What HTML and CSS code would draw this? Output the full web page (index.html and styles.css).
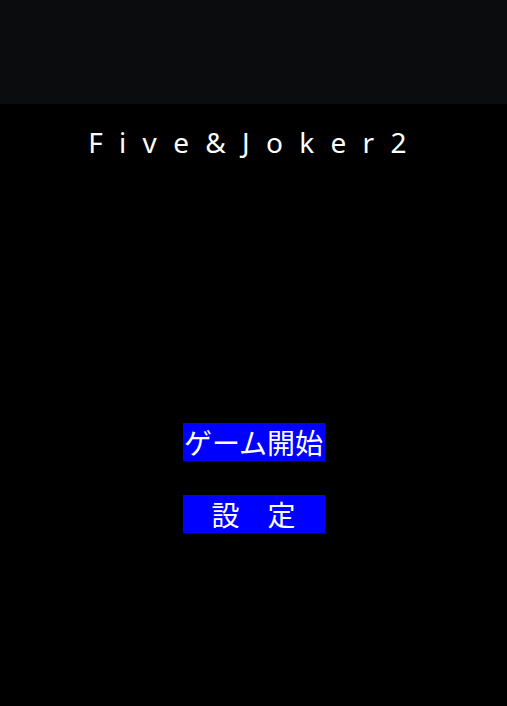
FILE: index.html
```html
<!DOCTYPE html>
<html lang="ja">
<head>
<meta charset="utf-8">
<title>Five&amp;Joker2</title>
<link rel="stylesheet" href="styles.css">
</head>
<body>
<div class="topbar"></div>
<main class="screen">
  <h1 class="title">Five&amp;Joker2</h1>
  <div class="menu">
    <button class="menu-btn" type="button">ゲーム開始</button>
    <button class="menu-btn" type="button">設　定</button>
  </div>
</main>
</body>
</html>
```
FILE: styles.css
```css
html, body {
  margin: 0;
  padding: 0;
  background: #000;
  height: 100%;
}
body {
  font-family: "Noto Sans CJK JP", "Noto Sans", sans-serif;
  color: #fff;
}
.topbar {
  height: 104px;
  background: #0b0c0e;
}
.screen {
  display: flex;
  flex-direction: column;
  align-items: center;
}
.title {
  margin: 24px 0 0 4px;
  font-family: "Noto Sans", "Open Sans", sans-serif;
  font-size: 28px;
  line-height: 29px;
  font-weight: 400;
  letter-spacing: 16.3px;
  white-space: nowrap;
}
.menu {
  margin-top: 266px;
  display: flex;
  flex-direction: column;
  align-items: center;
  gap: 34px;
}
.menu-btn {
  width: 142px;
  height: 38px;
  margin: 0;
  padding: 0;
  border: 0;
  background: #0000ff;
  color: #fff;
  font-family: "Noto Sans CJK JP", sans-serif;
  font-size: 28px;
  line-height: 38px;
  font-weight: 400;
  text-align: center;
  white-space: nowrap;
}
```
